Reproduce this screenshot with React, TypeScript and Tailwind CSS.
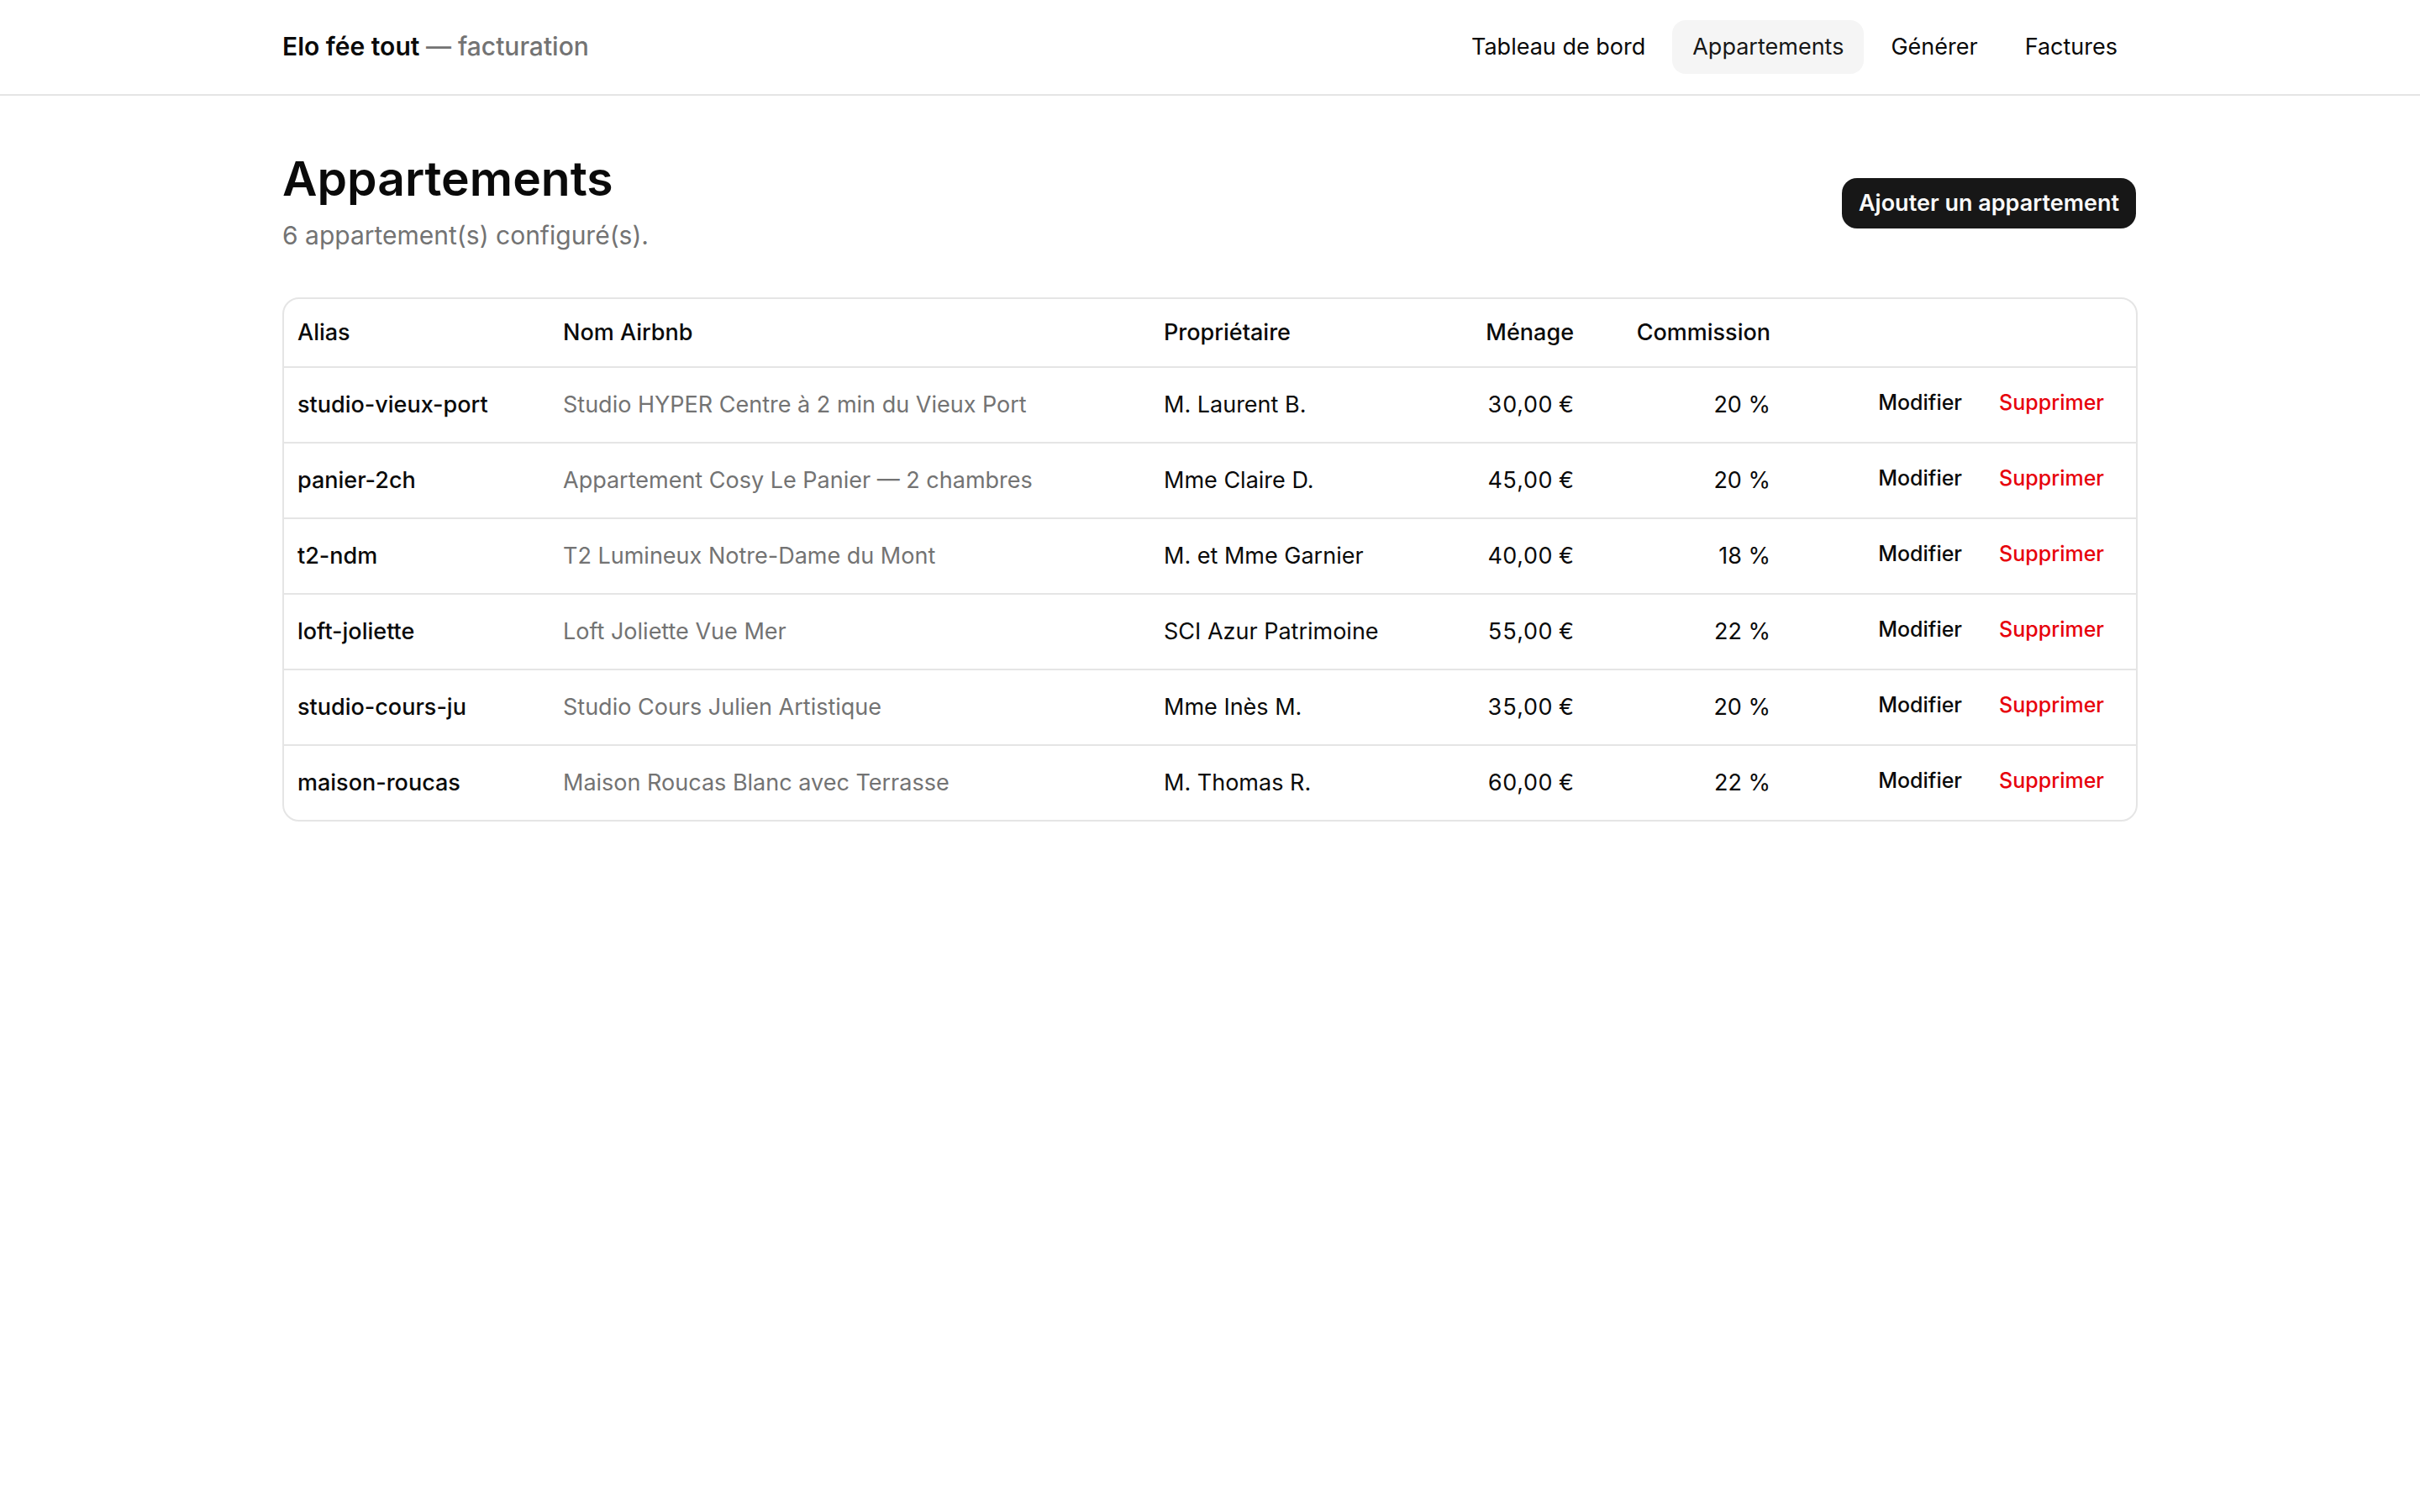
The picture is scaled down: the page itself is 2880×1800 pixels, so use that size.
import { clsx } from "clsx";

interface Apartment {
  alias: string;
  airbnbName: string;
  owner: string;
  cleaningFee: string;
  commission: string;
}

const navItems = [
  { label: "Tableau de bord", href: "/" },
  { label: "Appartements", href: "/appartements" },
  { label: "Générer", href: "/generer" },
  { label: "Factures", href: "/factures" },
];

const apartments: Apartment[] = [
  {
    alias: "studio-vieux-port",
    airbnbName: "Studio HYPER Centre à 2 min du Vieux Port",
    owner: "M. Laurent B.",
    cleaningFee: "30,00 €",
    commission: "20 %",
  },
  {
    alias: "panier-2ch",
    airbnbName: "Appartement Cosy Le Panier — 2 chambres",
    owner: "Mme Claire D.",
    cleaningFee: "45,00 €",
    commission: "20 %",
  },
  {
    alias: "t2-ndm",
    airbnbName: "T2 Lumineux Notre-Dame du Mont",
    owner: "M. et Mme Garnier",
    cleaningFee: "40,00 €",
    commission: "18 %",
  },
  {
    alias: "loft-joliette",
    airbnbName: "Loft Joliette Vue Mer",
    owner: "SCI Azur Patrimoine",
    cleaningFee: "55,00 €",
    commission: "22 %",
  },
  {
    alias: "studio-cours-ju",
    airbnbName: "Studio Cours Julien Artistique",
    owner: "Mme Inès M.",
    cleaningFee: "35,00 €",
    commission: "20 %",
  },
  {
    alias: "maison-roucas",
    airbnbName: "Maison Roucas Blanc avec Terrasse",
    owner: "M. Thomas R.",
    cleaningFee: "60,00 €",
    commission: "22 %",
  },
];

function Header({ current }: { current: string }) {
  return (
    <header className="border-b-2 border-neutral-200">
      <div className="mx-auto flex h-28 max-w-[2304px] items-center justify-between px-12">
        <a href="/" className="pb-0.5 text-[30px] leading-12 font-semibold">
          Elo fée tout{" "}
          <span className="font-medium text-neutral-500">— facturation</span>
        </a>
        <nav className="flex items-center gap-2">
          {navItems.map((item) => (
            <a
              key={item.href}
              href={item.href}
              aria-current={item.href === current ? "page" : undefined}
              className={clsx(
                "rounded-2xl px-6 py-3 text-[27px] leading-10 transition-colors hover:bg-neutral-100",
                item.href === current && "bg-neutral-100 text-neutral-900"
              )}
            >
              {item.label}
            </a>
          ))}
        </nav>
      </div>
    </header>
  );
}

function ApartmentsTable({ rows }: { rows: Apartment[] }) {
  return (
    <div className="overflow-x-auto rounded-[20px] border-2 border-neutral-200">
      <table className="w-full table-fixed text-[27px] leading-10">
        <colgroup>
          <col className="w-[316px]" />
          <col className="w-[715px]" />
          <col className="w-[346px]" />
          <col className="w-[174px]" />
          <col className="w-[234px]" />
          <col className="w-[419px]" />
        </colgroup>
        <thead>
          <tr className="h-[81px] border-b-2 border-neutral-200 text-left whitespace-nowrap">
            <th className="px-4 font-medium">Alias</th>
            <th className="px-4 font-medium">Nom Airbnb</th>
            <th className="px-4 font-medium">Propriétaire</th>
            <th className="px-4 text-right font-medium">Ménage</th>
            <th className="px-4 text-right font-medium">Commission</th>
            <th className="px-4" aria-label="Actions" />
          </tr>
        </thead>
        <tbody>
          {rows.map((row) => (
            <tr
              key={row.alias}
              className="h-[90px] border-b-2 border-neutral-200 whitespace-nowrap last:h-[89px] last:border-b-0"
            >
              <td className="px-4 font-medium">{row.alias}</td>
              <td className="px-4 text-neutral-500">{row.airbnbName}</td>
              <td className="px-4">{row.owner}</td>
              <td className="px-4 text-right tabular-nums">{row.cleaningFee}</td>
              <td className="px-4 text-right">{row.commission}</td>
              <td className="px-4 pb-1.5">
                <div className="flex justify-end">
                  <a href={`/appartements/${row.alias}`} className="px-[22px] text-[25px] leading-10 font-medium">
                    Modifier
                  </a>
                  <button type="button" className="px-[22px] text-[25px] leading-10 font-medium text-red-600">
                    Supprimer
                  </button>
                </div>
              </td>
            </tr>
          ))}
        </tbody>
      </table>
    </div>
  );
}

export default function App() {
  return (
    <div className="min-h-screen bg-white font-[Inter,'Liberation_Sans',sans-serif] text-neutral-950 antialiased">
      <Header current="/appartements" />
      <main className="mx-auto max-w-[2304px] space-y-12 px-12 py-16">
        <div className="flex items-center justify-between">
          <div className="pb-0.5">
            <h1 className="text-[57px] leading-[70px] font-semibold">Appartements</h1>
            <p className="mt-2 text-[30px] leading-12 text-neutral-500">
              {apartments.length} appartement(s) configuré(s).
            </p>
          </div>
          <button
            type="button"
            className="h-16 rounded-[20px] border-2 border-transparent bg-neutral-900 bg-clip-padding px-5 text-[27px] font-semibold text-neutral-50"
          >
            Ajouter un appartement
          </button>
        </div>
        <ApartmentsTable rows={apartments} />
      </main>
    </div>
  );
}
